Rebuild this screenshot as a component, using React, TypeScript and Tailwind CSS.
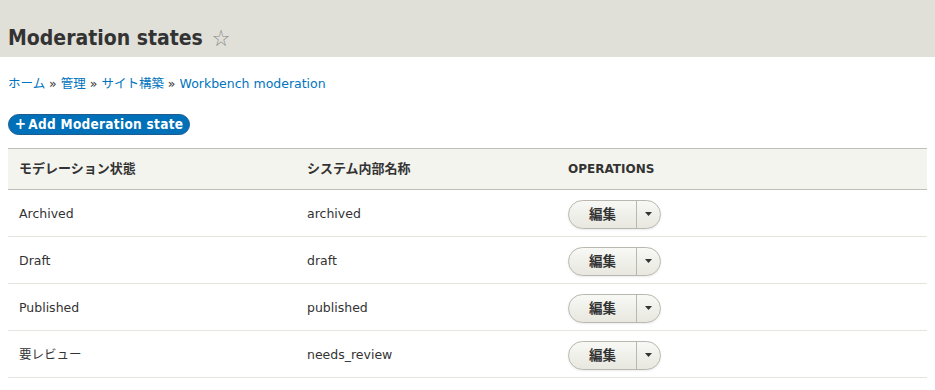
import React from "react";

const rows = [
  { label: "Archived", machine: "archived" },
  { label: "Draft", machine: "draft" },
  { label: "Published", machine: "published" },
  { label: "要レビュー", machine: "needs_review" },
];

const font = {
  fontFamily: '"DejaVu Sans", "Noto Sans CJK JP", sans-serif',
};

export default function App() {
  return (
    <div className="min-h-[390px] bg-white text-[#333]" style={font}>
      {/* Header */}
      <div className="h-[57px] bg-[#e0e0d8] px-[8px] pt-[23px]">
        <h1 className="flex items-center font-['DejaVu_Sans_Condensed',sans-serif] text-[21px] font-bold leading-[30px] text-[#333]">
          Moderation states
          <span className="ml-[9px] text-[23px] font-normal text-[#888]">☆</span>
        </h1>
      </div>

      {/* Breadcrumb */}
      <div className="px-[8px] pt-[18px] text-[12.5px] leading-[18px] text-[#0074bd]">
        <a className="text-[#0074bd]">ホーム</a>
        <span className="text-[#333]"> » </span>
        <a className="text-[#0074bd]">管理</a>
        <span className="text-[#333]"> » </span>
        <a className="text-[#0074bd]">サイト構築</a>
        <span className="text-[#333]"> » </span>
        <a className="text-[#0074bd]">Workbench moderation</a>
      </div>

      {/* Action */}
      <div className="px-[8px] pt-[21px]">
        <button className="flex h-[21px] w-[182px] items-center justify-center rounded-full border border-[#1e5c90] bg-[#0071b8] font-['DejaVu_Sans_Condensed',sans-serif] text-[13.5px] font-bold tracking-[0.3px] text-white">
          <span className="mr-[2px] text-[15px] leading-none">+</span>Add Moderation state
        </button>
      </div>

      {/* Table */}
      <div className="mx-[8px] mt-[13px]">
        <div className="grid h-[42px] grid-cols-[288px_261px_1fr] items-center border-y border-[#bfbfba] bg-[#f3f4ee] text-[12px] font-bold text-[#333]">
          <div className="pl-[11px] text-[13px]">モデレーション状態</div>
          <div className="pl-[11px] text-[13px]">システム内部名称</div>
          <div className="pl-[11px]">OPERATIONS</div>
        </div>
        {rows.map((r) => (
          <div
            key={r.machine}
            className="grid h-[47px] grid-cols-[288px_261px_1fr] items-center border-b border-[#e6e4df] pt-[2px] text-[12.5px] text-[#333]"
          >
            <div className="pl-[11px]">{r.label}</div>
            <div className="pl-[11px]">{r.machine}</div>
            <div className="pl-[11px]">
              <div className="flex h-[29px] w-[93px] items-center rounded-full border border-[#b8b8b0] bg-gradient-to-b from-[#f8f8f5] to-[#e8e8e0] shadow-[0_1px_2px_rgba(0,0,0,0.08)]">
                <div className="flex h-full w-[67px] items-center justify-center text-[13.5px] font-bold text-[#333]">
                  編集
                </div>
                <div className="flex h-full flex-1 items-center justify-center border-l border-[#b8b8b0]">
                  <svg width="7" height="4" viewBox="0 0 7 4">
                    <path d="M0 0h7L3.5 4z" fill="#333" />
                  </svg>
                </div>
              </div>
            </div>
          </div>
        ))}
      </div>
    </div>
  );
}
